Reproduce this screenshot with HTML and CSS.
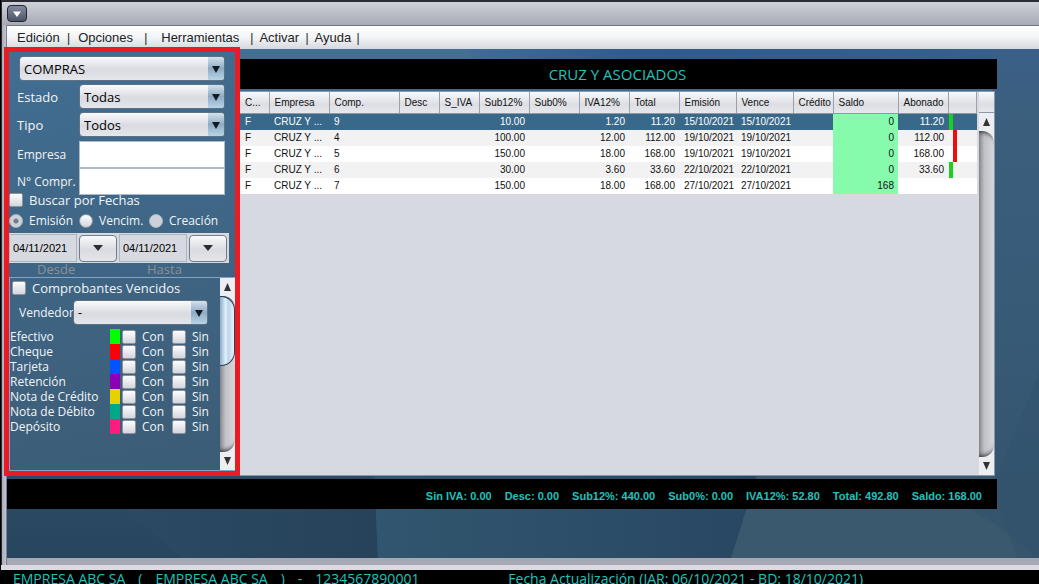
FILE: index.html
```html
<!DOCTYPE html>
<html lang="es">
<head>
<meta charset="utf-8">
<title>Compras</title>
<link rel="stylesheet" href="styles.css">
</head>
<body>
<div class="window">
  <header class="titlebar">
    <button class="sysmenu" aria-label="Menú de ventana"><svg width="8" height="6" viewBox="0 0 8 6"><path d="M0 0.5h8L4 6z" fill="#fff"/></svg></button>
  </header>
  <nav class="menubar">
    <button class="menu m-edit">Edición</button><span>|</span>
    <button class="menu m-opt">Opciones</button><span>|</span>
    <button class="menu m-tools">Herramientas</button><span>|</span>
    <button class="menu m-act">Activar</button><span>|</span>
    <button class="menu m-help">Ayuda</button><span>|</span>
  </nav>
  <div class="content">
    <svg class="wallpaper" viewBox="0 0 1032 510" preserveAspectRatio="none" aria-hidden="true">
      <defs>
        <linearGradient id="base" x1="0" y1="0" x2="0" y2="1"><stop offset="0" stop-color="#426f93"/><stop offset="1" stop-color="#28455e"/></linearGradient>
        <linearGradient id="top" x1="0" y1="0" x2="1" y2="0"><stop offset="0" stop-color="#426c96"/><stop offset=".3" stop-color="#2f5b8d"/><stop offset="1" stop-color="#37608a"/></linearGradient>
        <linearGradient id="mid" x1="0" y1="0" x2="1" y2="0"><stop offset="0" stop-color="#32566f"/><stop offset="1" stop-color="#284762"/></linearGradient>
        <linearGradient id="dark" x1="0" y1="0" x2="1" y2="0"><stop offset="0" stop-color="#2c4b65"/><stop offset="1" stop-color="#27425b"/></linearGradient>
        <linearGradient id="side" x1="0" y1="0" x2="0" y2="1"><stop offset="0" stop-color="#3a608a"/><stop offset=".1" stop-color="#3b5f7e"/><stop offset=".55" stop-color="#375a77"/><stop offset="1" stop-color="#34536b"/></linearGradient>
      </defs>
      <rect width="1032" height="510" fill="url(#base)"/>
      <path d="M460 0H1032V11H468z" fill="url(#top)"/>
      <path d="M80 430H370L371 510H174L120 460z" fill="url(#dark)"/>
      <path d="M367 427H750L724 510H371z" fill="url(#mid)"/>
      <path d="M750 427H1032V510H724z" fill="#3a596f"/>
      <path d="M985 0H1032V510H1028Q1000 480 960 460L985 440z" fill="url(#side)"/>
      <path d="M1032 325V510H1010Q990 450 985 440z" fill="#31526c" opacity=".5"/>
    </svg>
    <aside class="filters">
      <div class="fields">
        <div class="combo combo-main">
          <select aria-label="Módulo"><option>COMPRAS</option></select>
          <svg class="arrow" width="8" height="8" viewBox="0 0 8 8"><path d="M0 1h8L4 8z"/></svg>
        </div>
        <label for="estado">Estado</label>
        <div class="combo">
          <select id="estado"><option>Todas</option></select>
          <svg class="arrow" width="8" height="8" viewBox="0 0 8 8"><path d="M0 1h8L4 8z"/></svg>
        </div>
        <label for="tipo">Tipo</label>
        <div class="combo">
          <select id="tipo"><option>Todos</option></select>
          <svg class="arrow" width="8" height="8" viewBox="0 0 8 8"><path d="M0 1h8L4 8z"/></svg>
        </div>
      </div>
      <div class="texts">
        <label for="empresa">Empresa</label><input id="empresa" type="text">
        <label for="compr">N° Compr.</label><input id="compr" type="text">
      </div>
      <label class="check by-date"><input type="checkbox">Buscar por Fechas</label>
      <div class="radios">
        <label class="check"><input type="radio" name="fecha" checked disabled>Emisión</label>
        <label class="check"><input type="radio" name="fecha">Vencim.</label>
        <label class="check"><input type="radio" name="fecha" disabled>Creación</label>
      </div>
      <div class="dates">
        <input type="text" id="desde" value="04/11/2021"><button aria-label="Elegir desde"><svg width="10" height="6" viewBox="0 0 10 6"><path d="M0 0h10L5 6z"/></svg></button>
        <input type="text" id="hasta" value="04/11/2021"><button aria-label="Elegir hasta"><svg width="10" height="6" viewBox="0 0 10 6"><path d="M0 0h10L5 6z"/></svg></button>
      </div>
      <div class="datelabels"><label for="desde">Desde</label><label for="hasta">Hasta</label></div>
      <div class="panel">
        <div class="panel-body">
          <label class="check expired"><input type="checkbox">Comprobantes Vencidos</label>
          <div class="seller">
            <label for="vendedor">Vendedor</label>
            <div class="combo">
              <select id="vendedor"><option>-</option></select>
              <svg class="arrow" width="8" height="8" viewBox="0 0 8 8"><path d="M0 1h8L4 8z"/></svg>
            </div>
          </div>
          <ul class="payments">
            <li><span>Efectivo</span><i class="green"></i><label class="check"><input type="checkbox">Con</label><label class="check"><input type="checkbox">Sin</label></li>
            <li><span>Cheque</span><i class="red"></i><label class="check"><input type="checkbox">Con</label><label class="check"><input type="checkbox">Sin</label></li>
            <li><span>Tarjeta</span><i class="blue"></i><label class="check"><input type="checkbox">Con</label><label class="check"><input type="checkbox">Sin</label></li>
            <li><span>Retención</span><i class="purple"></i><label class="check"><input type="checkbox">Con</label><label class="check"><input type="checkbox">Sin</label></li>
            <li><span>Nota de Crédito</span><i class="yellow"></i><label class="check"><input type="checkbox">Con</label><label class="check"><input type="checkbox">Sin</label></li>
            <li><span>Nota de Débito</span><i class="teal"></i><label class="check"><input type="checkbox">Con</label><label class="check"><input type="checkbox">Sin</label></li>
            <li><span>Depósito</span><i class="pink"></i><label class="check"><input type="checkbox">Con</label><label class="check"><input type="checkbox">Sin</label></li>
          </ul>
        </div>
        <div class="scroll">
          <svg width="15" height="18" viewBox="0 0 15 18"><path d="M4 13h7L7.500 5z" fill="#333"/></svg>
          <div class="track"><div class="thumb"></div></div>
          <svg width="15" height="18" viewBox="0 0 15 18"><path d="M4 5h7L7.500 13z" fill="#333"/></svg>
        </div>
      </div>
    </aside>
    <main class="main">
      <h1>CRUZ Y ASOCIADOS</h1>
      <div class="grid">
        <div class="grid-body">
          <table>
            <colgroup><col class="w29"><col class="w60"><col class="w70"><col class="w40"><col class="w40"><col class="w50"><col class="w50"><col class="w50"><col class="w50"><col class="w57"><col class="w57"><col class="w40"><col class="w65"><col class="w50"><col></colgroup>
            <thead><tr><th>C...</th><th>Empresa</th><th>Comp.</th><th>Desc</th><th>S_IVA</th><th>Sub12%</th><th>Sub0%</th><th>IVA12%</th><th>Total</th><th>Emisión</th><th>Vence</th><th>Crédito</th><th>Saldo</th><th>Abonado</th><th></th></tr></thead>
            <tbody>
              <tr class="selected"><td>F</td><td>CRUZ Y ...</td><td>9</td><td></td><td></td><td class="n">10.00</td><td></td><td class="n">1.20</td><td class="n">11.20</td><td>15/10/2021</td><td>15/10/2021</td><td></td><td class="n saldo">0</td><td class="n">11.20</td><td class="mark"><i class="cash"></i></td></tr>
              <tr><td>F</td><td>CRUZ Y ...</td><td>4</td><td></td><td></td><td class="n">100.00</td><td></td><td class="n">12.00</td><td class="n">112.00</td><td>19/10/2021</td><td>19/10/2021</td><td></td><td class="n saldo">0</td><td class="n">112.00</td><td class="mark"><i class="cheque"></i></td></tr>
              <tr><td>F</td><td>CRUZ Y ...</td><td>5</td><td></td><td></td><td class="n">150.00</td><td></td><td class="n">18.00</td><td class="n">168.00</td><td>19/10/2021</td><td>19/10/2021</td><td></td><td class="n saldo">0</td><td class="n">168.00</td><td class="mark"><i class="cheque"></i></td></tr>
              <tr><td>F</td><td>CRUZ Y ...</td><td>6</td><td></td><td></td><td class="n">30.00</td><td></td><td class="n">3.60</td><td class="n">33.60</td><td>22/10/2021</td><td>22/10/2021</td><td></td><td class="n saldo">0</td><td class="n">33.60</td><td class="mark"><i class="cash"></i></td></tr>
              <tr><td>F</td><td>CRUZ Y ...</td><td>7</td><td></td><td></td><td class="n">150.00</td><td></td><td class="n">18.00</td><td class="n">168.00</td><td>27/10/2021</td><td>27/10/2021</td><td></td><td class="n saldo">168</td><td></td><td></td></tr>
            </tbody>
          </table>
        </div>
        <div class="scroll">
          <div class="corner"></div>
          <svg width="15" height="18" viewBox="0 0 15 18"><path d="M4 13h7L7.500 5z" fill="#333"/></svg>
          <div class="track"></div>
          <svg width="15" height="18" viewBox="0 0 15 18"><path d="M4 5h7L7.500 13z" fill="#333"/></svg>
        </div>
      </div>
    </main>
    <div class="totals"><span>Sin IVA: 0.00</span><span>Desc: 0.00</span><span>Sub12%: 440.00</span><span>Sub0%: 0.00</span><span>IVA12%: 52.80</span><span>Total: 492.80</span><span>Saldo: 168.00</span></div>
  </div>
</div>
<footer class="status">
  <span>EMPRESA ABC SA</span><span>(</span><span>EMPRESA ABC SA</span><span>)</span><span>-</span><span class="ruc">1234567890001</span>
  <span>Fecha Actualización (JAR: 06/10/2021 - BD: 18/10/2021)</span>
</footer>
</body>
</html>
```
FILE: styles.css
```css
* { box-sizing: border-box; }

:root {
  --hand: "Comic Sans MS", "Open Sans", sans-serif;
  --ui: "Liberation Sans", Arial, sans-serif;
  --cyan: #1ec3bd;
  --face: linear-gradient(#fafafb, #d9dbe1 55%, #e4e6ea);
}

body {
  margin: 0;
  height: 100vh;
  overflow: hidden;
  display: flex;
  flex-direction: column;
  background: #000;
  font-family: var(--hand);
  font-size: 13px;
}

button, input, select { font: inherit; margin: 0; }

.window {
  flex: 1;
  min-height: 0;
  display: flex;
  flex-direction: column;
  margin-left: 1px;
  padding: 0 0 0 6px;
  border-top: 2px solid #2b2c33;
  border-bottom: 5px solid #dbdae3;
  background: linear-gradient(90deg, #2b2c33 1px, #a9acb8 1px, #c2c4cd 5px, #73809a 5px);
}

.titlebar {
  flex: none;
  height: 23px;
  margin-left: -5px;
  padding: 3px 5px;
  background: linear-gradient(#cfd1d8, #a7aab5);
}

.sysmenu {
  display: grid;
  place-items: center;
  width: 20px;
  height: 17px;
  padding: 0;
  border: 1px solid #23262f;
  border-radius: 4px;
  background: linear-gradient(#858b9f, #4d5468);
}

.menubar {
  flex: none;
  display: flex;
  align-items: center;
  height: 24px;
  padding-left: 10px;
  border-top: 1px solid #70747f;
  background: linear-gradient(#fff, #f3f4f6 50%, #d5d8de);
  font: 12px var(--ui);
  color: #222;
}

.menu {
  padding: 0;
  border: 0;
  background: none;
  color: inherit;
  text-align: left;
  font-size: 13px;
}

.m-edit { width: 50px; }
.m-opt { width: 66px; margin-left: 8px; }
.m-tools { width: 89px; margin-left: 14px; }
.m-act { width: 46px; margin-left: 6px; }
.m-help { width: 42px; margin-left: 6px; }

.content {
  position: relative;
  z-index: 0;
  flex: 1;
  min-height: 0;
  display: grid;
  grid-template-columns: 233px minmax(0, 1fr) 42px;
  grid-template-rows: minmax(0, 1fr) 30px 46px;
  row-gap: 3px;
  border-bottom: 7px solid #a6a8b3;
  box-shadow: inset 0 1px #6f95b8;
}

.wallpaper {
  position: absolute;
  inset: 0;
  width: 100%;
  height: 100%;
  z-index: -1;
}

.filters {
  display: flex;
  flex-direction: column;
  margin: -2px 0 0 -3px;
  border: 5px solid #ea1b23;
  background: linear-gradient(170deg, #416e92, #3c5c76);
  color: #f2f5f8;
}

.fields {
  display: grid;
  grid-template-columns: 60px 1fr;
  row-gap: 3px;
  padding: 4px 10px 0 10px;
}

.fields label { margin-left: -2px; align-self: center; }
.combo-main { grid-column: 1 / -1; }

.combo {
  position: relative;
  height: 25px;
  border: 1px solid #5d7287;
  border-radius: 4px;
  overflow: hidden;
  background: var(--face);
}

.combo select {
  appearance: none;
  width: 100%;
  height: 23px;
  padding: 0 20px 0 4px;
  border: 0;
  background: linear-gradient(#d3e0ec, #8facc6 50%, #b9d3e6) right / 16px 100% no-repeat;
  color: #000;
}

.arrow {
  position: absolute;
  top: 8px;
  right: 4px;
  fill: #151b22;
  pointer-events: none;
}

.texts {
  display: grid;
  grid-template-columns: 62px 1fr;
  align-items: center;
  padding: 4px 10px 0 8px;
  font-size: 12px;
  white-space: nowrap;
}

.texts input {
  width: 100%;
  height: 27px;
  border: 1px solid #aebbc6;
  background: #fff;
}

.check { display: flex; align-items: center; }

.check input {
  appearance: none;
  flex: none;
  width: 14px;
  height: 14px;
  border: 1px solid #8e949d;
  border-radius: 2px;
  background: linear-gradient(#fdfdfe, #d3d6dd);
}

.check input[type="radio"] { border-radius: 50%; }
.check input:disabled { border-color: #a9b5c1; background: #ccd2da; }
.check input:checked { background: radial-gradient(circle, #737c87 2px, #ccd2da 3px); }

.by-date { gap: 6px; height: 16px; margin-top: -3px; }

.radios {
  display: grid;
  grid-template-columns: 70px 70px 1fr;
  height: 25px;
  font-size: 12px;
}

.radios .check { gap: 6px; }

.dates {
  display: grid;
  grid-template-columns: 68px 42px 68px 42px;
  align-items: center;
  width: 220px;
  height: 30px;
  background: #d6d9df;
}

.dates input {
  width: 100%;
  height: 28px;
  padding: 0 3px;
  border: 1px solid #a8b6c5;
  background: #d6d9df;
  font: 11px var(--ui);
}

.dates button {
  display: grid;
  place-items: center;
  margin: 0 2px;
  height: 27px;
  padding: 0;
  border: 1px solid #747a86;
  border-radius: 4px;
  background: var(--face);
  fill: #2b2e34;
}

.datelabels {
  display: grid;
  grid-template-columns: 110px 1fr;
  height: 14px;
  padding-left: 28px;
  line-height: 13px;
  color: #8a9096;
}

.panel {
  flex: 1;
  min-height: 0;
  display: flex;
  border: 1px solid #7fa3c9;
  border-right: 0;
}

.panel-body { flex: 1; min-width: 0; }

.expired { gap: 6px; height: 20px; padding-left: 2px; }

.seller {
  display: grid;
  grid-template-columns: 54px 135px;
  align-items: center;
  padding: 2px 0 0 9px;
  font-size: 12px;
}

.payments {
  margin: 4px 0 0;
  padding: 0;
  list-style: none;
  font-size: 12px;
}

.payments li {
  display: grid;
  grid-template-columns: 100px 12px 50px 50px;
  align-items: center;
  height: 15px;
  line-height: 15px;
  white-space: nowrap;
}

.payments i { height: 15px; width: 10px; }
.payments .check { gap: 6px; }

.green { background: #0f0; }
.red { background: #f00; }
.blue { background: #0054ff; }
.purple { background: #8b00b4; }
.yellow { background: #e6d200; }
.teal { background: #00a888; }
.pink { background: #ff1c7c; }

.scroll {
  flex: none;
  display: flex;
  flex-direction: column;
  width: 15px;
  background: #eceef1;
}

.track {
  flex: 1;
  border-radius: 0 12px 12px 0;
  background: linear-gradient(90deg, #85878d, #bfc1c7 35%, #d6d8dd);
  box-shadow: inset 0 6px 5px -5px #222, inset 0 -6px 5px -5px #222;
}

.thumb {
  height: 70px;
  border: 1px solid #28405a;
  border-left: 0;
  border-radius: 0 14px 14px 0;
  background: linear-gradient(90deg, #8eabc5, #e0f0fc 40%, #bed6ea 60%, #e5f3fc);
}

.main {
  display: flex;
  flex-direction: column;
  min-width: 0;
  padding-top: 10px;
}

h1 {
  flex: none;
  margin: 0 0 2px;
  height: 30px;
  line-height: 31px;
  padding-right: 2px;
  background: #000;
  color: var(--cyan);
  font-size: 15px;
  font-weight: 400;
  text-align: center;
}

.grid {
  flex: 1;
  min-height: 0;
  display: flex;
  margin-right: 2px;
  border: solid #8998a8;
  border-width: 1px 1px 1px 0;
  background: #d6d9df;
}

.grid-body { flex: 1; min-width: 0; padding-right: 2px; }

table {
  width: 100%;
  table-layout: fixed;
  border-collapse: collapse;
  font: 10px var(--ui);
  color: #111;
}

th {
  height: 21px;
  padding: 0 0 0 5px;
  border-right: 1px solid #9da1ab;
  border-bottom: 1px solid #8d97a5;
  background: linear-gradient(#f7f8fa, #dcdee4 60%, #e6e8ec);
  font-weight: 400;
  text-align: left;
  white-space: nowrap;
}

td {
  height: 16px;
  padding: 0 0 0 5px;
  line-height: 16px;
  white-space: nowrap;
}

tbody tr { background: #fff; }
tbody tr:nth-child(even) { background: #f2f2f2; }
tbody tr.selected { background: #39698a; color: #fff; }
.n { padding: 0 4px 0 0; text-align: right; }
.saldo { background: #86fbac; color: #111; }

.mark { padding: 0; }
.mark i { display: block; width: 4px; height: 16px; }
.cash { background: #17d01f; margin-left: 1px; }
.cheque { background: #ee0c0c; margin-left: 5px; }

.w29 { width: 29px; }
.w40 { width: 40px; }
.w50 { width: 50px; }
.w57 { width: 57px; }
.w60 { width: 60px; }
.w65 { width: 65px; }
.w70 { width: 70px; }

.corner {
  height: 21px;
  border-bottom: 1px solid #8d97a5;
  background: linear-gradient(#f7f8fa, #dcdee4 60%, #e6e8ec);
}

.totals {
  grid-column: 1 / 3;
  display: flex;
  justify-content: flex-end;
  align-items: center;
  gap: 13px;
  padding: 3px 15px 0 0;
  background: #000;
  color: var(--cyan);
  font: bold 11px var(--ui);
}

.status {
  flex: none;
  display: flex;
  gap: 13px;
  height: 14px;
  padding-left: 13px;
  overflow: hidden;
  line-height: 18px;
  font-size: 14px;
  color: var(--cyan);
  white-space: nowrap;
}

.ruc { width: 180px; }
```
